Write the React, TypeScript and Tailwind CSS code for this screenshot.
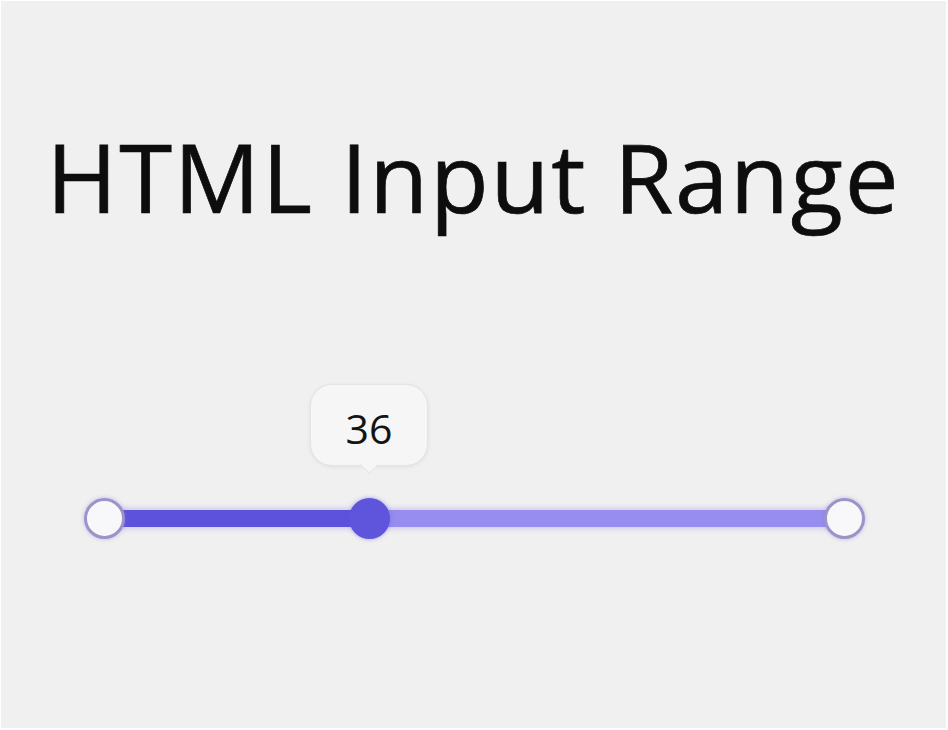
import React from "react";

const value = 36;

export default function App() {
  return (
    <div className="w-[948px] h-[730px] bg-white p-[1px] pb-[2px] pr-[2px]">
      <div
        className="w-full h-full bg-[#f0f0f0] flex flex-col items-center"
        style={{ fontFamily: '"Open Sans", "Noto Sans", sans-serif' }}
      >
        <h1 className="mt-[120px] text-[96px] leading-[110px] text-[#0d0d0d] font-normal tracking-[1.8px] whitespace-nowrap [-webkit-text-stroke:0.7px_#0d0d0d]">
          HTML Input Range
        </h1>

        {/* slider */}
        <div className="self-start mt-[279px] ml-[103px] relative w-[741px] h-[17px]">
          <div className="flex h-full shadow-[0_0_5px_2px_rgba(150,135,235,0.35)]">
            <div className="w-[265px] h-full bg-[#5d52dc]" />
            <div className="flex-1 h-full bg-[#978cef]" />
          </div>

          {/* min handle */}
          <div className="absolute left-[-20px] top-[-12px] w-[41px] h-[41px] rounded-full bg-[#f8f8fa] border-[3px] border-[#9c93c9] shadow-[0_0_4px_rgba(130,115,220,0.45)]" />

          {/* max handle */}
          <div className="absolute right-[-20px] top-[-12px] w-[41px] h-[41px] rounded-full bg-[#f8f8fa] border-[3px] border-[#9c93c9] shadow-[0_0_4px_rgba(130,115,220,0.45)]" />

          {/* value thumb */}
          <div className="absolute left-[245px] top-[-12px] w-[41px] h-[41px] rounded-full bg-[#5f55dd] shadow-[0_0_4px_rgba(95,85,221,0.5)]" />

          {/* value tooltip */}
          <div className="absolute left-[206px] top-[-126px] w-[118px] h-[87px] flex flex-col items-center">
            <div className="w-full h-full rounded-[22px] bg-[#f6f6f6] border border-[#e4e4e4] shadow-[0_1px_4px_rgba(0,0,0,0.07)] flex items-center justify-center pt-[8px]">
              <span className="text-[41px] leading-none text-[#141414]">{value}</span>
            </div>
            <div className="w-[14px] h-[14px] bg-[#f6f6f6] rotate-45 -mt-[8px] border-r border-b border-[#e4e4e4]" />
          </div>
        </div>
      </div>
    </div>
  );
}
